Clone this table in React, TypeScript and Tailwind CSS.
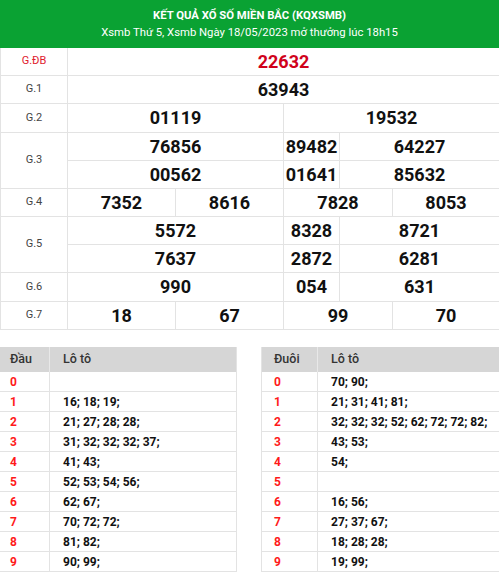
import React from "react";

const B = "border-[#e3e3e3]";

function Num({ v, red }: { v: string; red?: boolean }) {
  return (
    <span className={`text-[18px] font-bold leading-none ${red ? "text-[#d0021b]" : "text-[#111]"}`}>{v}</span>
  );
}

function Cell({ w, v, red, last }: { w: string; v: string; red?: boolean; last?: boolean }) {
  return (
    <div className={`${w} h-full flex items-center justify-center ${last ? "" : `border-r ${B}`}`}>
      <Num v={v} red={red} />
    </div>
  );
}

function Label({ t, red }: { t: string; red?: boolean }) {
  return (
    <div className={`w-[67px] shrink-0 border-r ${B} flex items-center justify-center text-[11px] ${red ? "text-[#e0202e]" : "text-[#444]"}`}>
      {t}
    </div>
  );
}

function ThreeRow({ a, b, c, h }: { a: string; b: string; c: string; h: string }) {
  return (
    <div className={`flex ${h} border-b ${B}`}>
      <Cell w="w-[216px]" v={a} />
      <Cell w="w-[56px]" v={b} />
      <Cell w="flex-1" v={c} last />
    </div>
  );
}

function Loto({ head, rows, first, pad, border }: { head: string; rows: string[]; first: string; pad: string; border: boolean }) {
  return (
    <div className={`flex-1 ${border ? `border-l ${B}` : ""}`}>
      <div className="flex h-[25px] bg-[#d6d6d6] text-[12.5px] font-medium text-[#333]">
        <div className={`${first} ${pad} flex items-center border-r border-[#e8e8e8]`}>{head}</div>
        <div className="flex-1 pl-[13px] flex items-center">Lô tô</div>
      </div>
      {rows.map((r, i) => (
        <div key={i} className={`flex h-[20px] border-b ${B} text-[12px] font-bold`}>
          <div className={`${first} ${pad} flex items-center border-r ${B} text-[#ff1a1a]`}>{i}</div>
          <div className="flex-1 pl-[13px] flex items-center text-[#111]">{r}</div>
        </div>
      ))}
    </div>
  );
}

export default function App() {
  return (
    <div className="w-[499px] h-[573px] overflow-hidden bg-white" style={{ fontFamily: "Roboto, 'Noto Sans', sans-serif" }}>
      <div className="h-[48px] bg-[#0aa233] text-white flex flex-col items-center justify-center">
        <div className="text-[11.3px] font-bold leading-[16px]">KẾT QUẢ XỔ SỐ MIỀN BẮC (KQXSMB)</div>
        <div className="text-[11.3px] leading-[17px]">Xsmb Thứ 5, Xsmb Ngày 18/05/2023 mở thưởng lúc 18h15</div>
      </div>

      <div className={`border-l ${B}`}>
        <div className={`flex h-[28px] border-b ${B}`}>
          <Label t="G.ĐB" red />
          <Cell w="flex-1" v="22632" red last />
        </div>
        <div className={`flex h-[28px] border-b ${B}`}>
          <Label t="G.1" />
          <Cell w="flex-1" v="63943" last />
        </div>
        <div className={`flex h-[29px] border-b ${B}`}>
          <Label t="G.2" />
          <Cell w="w-[216px]" v="01119" />
          <Cell w="flex-1" v="19532" last />
        </div>
        <div className="flex h-[56px]">
          <div className={`w-[67px] shrink-0 border-b ${B} flex`}>
            <Label t="G.3" />
          </div>
          <div className="flex-1 flex flex-col">
            <ThreeRow a="76856" b="89482" c="64227" h="h-[28px]" />
            <ThreeRow a="00562" b="01641" c="85632" h="h-[28px]" />
          </div>
        </div>
        <div className={`flex h-[28px] border-b ${B}`}>
          <Label t="G.4" />
          <Cell w="w-[108px]" v="7352" />
          <Cell w="w-[108px]" v="8616" />
          <Cell w="w-[109px]" v="7828" />
          <Cell w="flex-1" v="8053" last />
        </div>
        <div className="flex h-[56px]">
          <div className={`w-[67px] shrink-0 border-b ${B} flex`}>
            <Label t="G.5" />
          </div>
          <div className="flex-1 flex flex-col">
            <ThreeRow a="5572" b="8328" c="8721" h="h-[28px]" />
            <ThreeRow a="7637" b="2872" c="6281" h="h-[28px]" />
          </div>
        </div>
        <div className={`flex h-[29px] border-b ${B}`}>
          <Label t="G.6" />
          <Cell w="w-[216px]" v="990" />
          <Cell w="w-[56px]" v="054" />
          <Cell w="flex-1" v="631" last />
        </div>
        <div className={`flex h-[28px] border-b ${B}`}>
          <Label t="G.7" />
          <Cell w="w-[108px]" v="18" />
          <Cell w="w-[108px]" v="67" />
          <Cell w="w-[109px]" v="99" />
          <Cell w="flex-1" v="70" last />
        </div>
      </div>

      <div className="flex gap-[24px] mt-[17px]">
        <div className={`w-[237px] border-r ${B} flex`}>
          <Loto
            head="Đầu"
            first="w-[50px]"
            pad="pl-[10px]"
            border={false}
            rows={["", "16; 18; 19;", "21; 27; 28; 28;", "31; 32; 32; 32; 37;", "41; 43;", "52; 53; 54; 56;", "62; 67;", "70; 72; 72;", "81; 82;", "90; 99;"]}
          />
        </div>
        <div className="flex-1 flex">
          <Loto
            head="Đuôi"
            first="w-[56px]"
            pad="pl-[12px]"
            border
            rows={["70; 90;", "21; 31; 41; 81;", "32; 32; 32; 52; 62; 72; 72; 82;", "43; 53;", "54;", "", "16; 56;", "27; 37; 67;", "18; 28; 28;", "19; 99;"]}
          />
        </div>
      </div>
    </div>
  );
}
